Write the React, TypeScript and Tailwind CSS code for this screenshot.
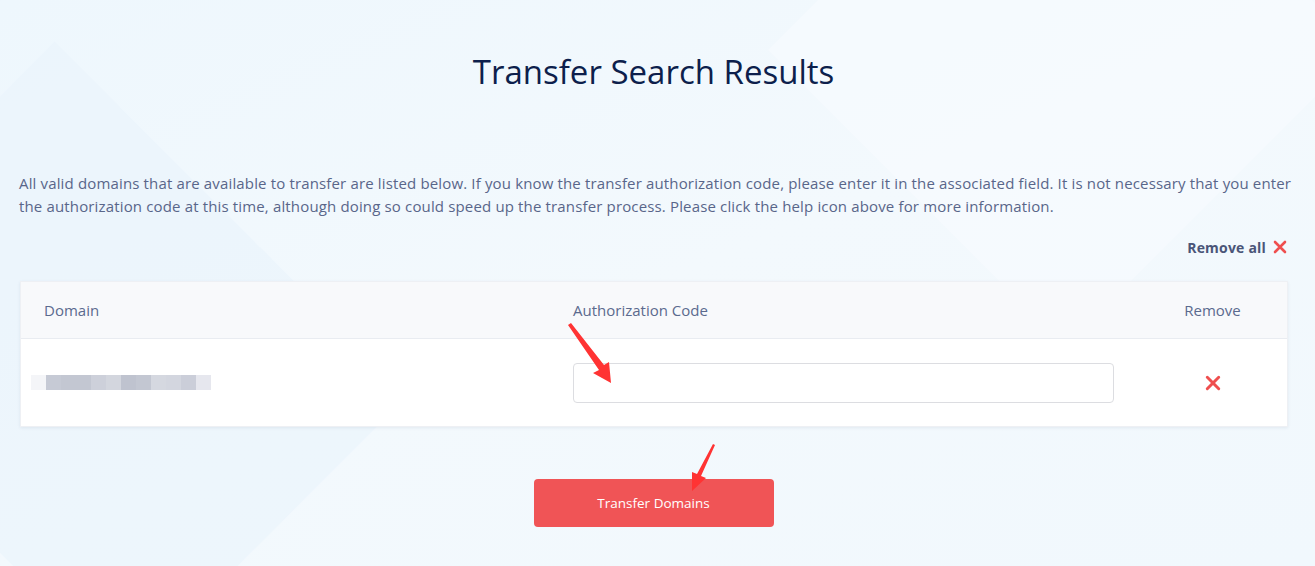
import React from "react";

const blocks = [
  "#f4f5f8",
  "#c6cad5",
  "#c3c7d2",
  "#c3c7d2",
  "#cdd0da",
  "#d3d6de",
  "#bfc3cf",
  "#c3c7d2",
  "#d5d8e0",
  "#d3d6df",
  "#cbced9",
  "#e6e7ee",
];

const RedX = ({ size = 14 }: { size?: number }) => (
  <svg width={size} height={size} viewBox="0 0 14 14" fill="none">
    <path d="M2 2L12 12M12 2L2 12" stroke="#ef4f4f" strokeWidth="2.6" strokeLinecap="round" />
  </svg>
);

export default function App() {
  return (
    <div
      className="relative w-[1315px] h-[566px] overflow-hidden bg-gradient-to-br from-[#eef7fd] via-[#f3f9fd] to-[#f1f8fd]"
      style={{ fontFamily: "'Open Sans', 'Noto Sans', sans-serif" }}
    >
      <div className="pointer-events-none absolute -left-40 top-40 h-[400px] w-[500px] rotate-45 bg-[#eaf4fc] opacity-60" />
      <div className="pointer-events-none absolute right-10 -top-40 h-[420px] w-[420px] rotate-45 bg-[#f6fbfe] opacity-70" />

      <div className="relative flex flex-col px-[19px]">
        <h1 className="pt-[50px] pr-[8px] text-center text-[33px] leading-[44px] font-medium text-[#0d1f4c]">
          Transfer Search Results
        </h1>

        <p className="mt-[78px] text-[15px] leading-[23px] tracking-[0.15px] text-[#59668a]">
          All valid domains that are available to transfer are listed below. If you know the transfer authorization
          code, please enter it in the associated field. It is not necessary that you enter the authorization code at
          this time, although doing so could speed up the transfer process. Please click the help icon above for more
          information.
        </p>

        <div className="mt-[18px] flex h-[22px] items-center justify-end gap-[7px] pr-[9px]">
          <span className="text-[14px] font-bold tracking-[0.2px] text-[#4a5578]">Remove all</span>
          <RedX size={14} />
        </div>

        <div className="mt-[23px] mx-px w-[1268px] bg-white shadow-[0_1px_3px_rgba(30,50,90,0.08)] border border-[#eef0f4]">
          <div className="grid grid-cols-[528px_589px_1fr] h-[57px] items-center bg-[#f8f9fb] border-b border-[#e9ecf1] text-[15px] text-[#5b6a8e]">
            <div className="pl-[23px]">Domain</div>
            <div className="pl-[24px]">Authorization Code</div>
            <div className="text-center">Remove</div>
          </div>
          <div className="grid grid-cols-[528px_589px_1fr] h-[87px] items-center">
            <div className="flex pl-[10px]">
              {blocks.map((c, i) => (
                <div key={i} className="h-[15px] w-[15px]" style={{ backgroundColor: c }} />
              ))}
            </div>
            <div className="px-[24px]">
              <input className="h-[40px] w-[541px] rounded-[4px] border border-[#dcdde1] bg-white outline-none" />
            </div>
            <div className="flex justify-center">
              <RedX size={16} />
            </div>
          </div>
        </div>

        <div className="mt-[52px] flex justify-center pr-[8px]">
          <button className="h-[48px] w-[240px] rounded-[4px] bg-[#f05456] text-[13.5px] text-white">
            Transfer Domains
          </button>
        </div>
      </div>

      <svg className="pointer-events-none absolute left-0 top-0" width="1315" height="566">
        <polygon points="568,325 571,323 604,365 609,362 611,383 593,373 599,370" fill="#ff3333" />
        <polygon points="713,444 715,445 701,476 706,478 692,491 692,472 697,474" fill="#ff3333" />
      </svg>
    </div>
  );
}
